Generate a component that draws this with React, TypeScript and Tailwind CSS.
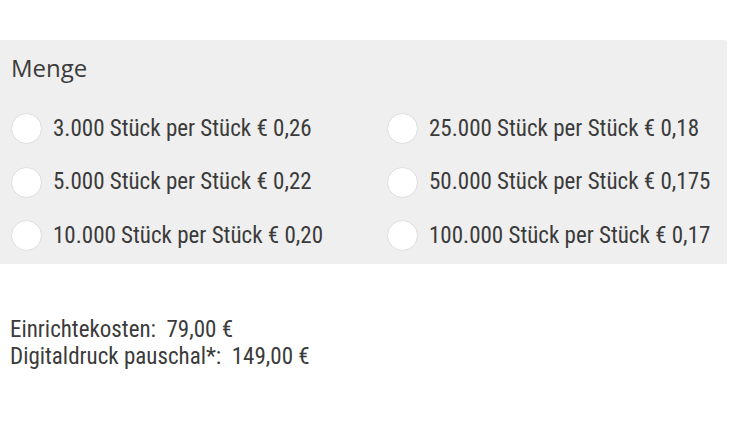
const options = [
  { qty: '3.000', price: '0,26' },
  { qty: '25.000', price: '0,18' },
  { qty: '5.000', price: '0,22' },
  { qty: '50.000', price: '0,175' },
  { qty: '10.000', price: '0,20' },
  { qty: '100.000', price: '0,17' },
];

function RadioOption({ qty, price }: { qty: string; price: string }) {
  return (
    <label className="flex items-center h-[53.5px] cursor-pointer">
      <span className="w-[31px] h-[31px] rounded-full bg-white border border-[#dedede] shrink-0" />
      <span className="ml-[11px] text-[23px] text-[#3b3b3b] font-['Roboto_Condensed',sans-serif] whitespace-nowrap">
        {qty} Stück per Stück € {price}
      </span>
    </label>
  );
}

export default function App() {
  return (
    <div className="w-[730px] h-[432px] bg-white pt-[40px]">
      <div className="w-[727px] bg-[#efefef] rounded-tr-[3px] pl-[11px] pt-[12px] pb-[1px]">
        <div className="text-[24px] text-[#3b3b3b] font-['Open_Sans',sans-serif] leading-[32px] mb-[18px]">Menge</div>
        <div className="grid grid-cols-[376px_1fr]">
          {options.map((o) => (
            <RadioOption key={o.qty} qty={o.qty} price={o.price} />
          ))}
        </div>
      </div>
      <div className="pl-[10px] pt-[52px] text-[23px] leading-[27px] text-[#3b3b3b] font-['Roboto_Condensed',sans-serif]">
        <div>Einrichtekosten:&nbsp; 79,00 €</div>
        <div>Digitaldruck pauschal*:&nbsp; 149,00 €</div>
      </div>
    </div>
  );
}
